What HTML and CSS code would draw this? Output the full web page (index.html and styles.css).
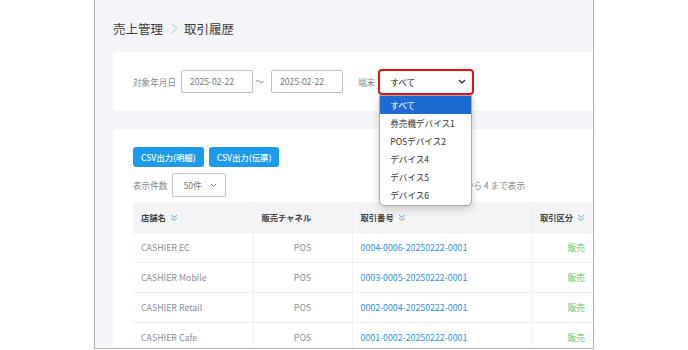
FILE: index.html
```html
<!DOCTYPE html>
<html>
	<head>
		<meta charset="utf-8">
		<title>取引履歴</title>
		<link rel="stylesheet" href="styles.css">
	</head>
	<body>
		<div class="frame">
			<h1 class="crumb">
				<span>売上管理</span>
				<svg class="crumb-sep" width="7" height="11" viewBox="0 0 7 11"><path d="M1 1 L6 5.5 L1 10" fill="none" stroke="#b9bcc4" stroke-width="1"/></svg>
				<span>取引履歴</span>
			</h1>
			<div class="card filter">
				<span class="label">対象年月日</span>
				<div class="input">2025-02-22</div>
				<span class="tilde">〜</span>
				<div class="input">2025-02-22</div>
				<span class="label term">端末</span>
				<div class="select-wrap">
					<div class="select active">
						<span>すべて</span>
						<svg width="8" height="5" viewBox="0 0 8 5"><path d="M1 1 L4 4 L7 1" fill="none" stroke="#333" stroke-width="1.3"/></svg>
					</div>
					<ul class="dropdown">
						<li class="on">すべて</li>
						<li>券売機デバイス1</li>
						<li>POSデバイス2</li>
						<li>デバイス4</li>
						<li>デバイス5</li>
						<li>デバイス6</li>
					</ul>
				</div>
			</div>
			<div class="card list">
				<div class="buttons">
					<div class="btn">CSV出力(明細)</div>
					<div class="btn">CSV出力(伝票)</div>
				</div>
				<div class="length-row">
					<span class="label">表示件数</span>
					<div class="select small">
						<span>50件</span>
						<svg width="7" height="5" viewBox="0 0 7 5"><path d="M1 1 L3.5 3.5 L6 1" fill="none" stroke="#777" stroke-width="1"/></svg>
					</div>
					<span class="info">4 件中 1 から 4 まで表示</span>
				</div>
				<table class="grid">
					<thead>
						<tr>
							<th class="c-shop">店舗名 <svg class="sort" width="8" height="8" viewBox="0 0 8 8"><path d="M1 1 L4 3.5 L7 1 M1 4 L4 6.5 L7 4" fill="none" stroke="#64aef2" stroke-width="1"/></svg></th>
							<th class="c-ch">販売チャネル</th>
							<th class="c-no">取引番号 <svg class="sort" width="8" height="8" viewBox="0 0 8 8"><path d="M1 1 L4 3.5 L7 1 M1 4 L4 6.5 L7 4" fill="none" stroke="#64aef2" stroke-width="1"/></svg></th>
							<th class="c-kind">取引区分 <svg class="sort" width="8" height="8" viewBox="0 0 8 8"><path d="M1 1 L4 3.5 L7 1 M1 4 L4 6.5 L7 4" fill="none" stroke="#64aef2" stroke-width="1"/></svg></th>
						</tr>
					</thead>
					<tbody>
						<tr>
							<td>CASHIER EC</td>
							<td class="center">POS</td>
							<td><span class="link">0004-0006-20250222-0001</span></td>
							<td class="right sale">販売</td>
						</tr>
						<tr>
							<td>CASHIER Mobile</td>
							<td class="center">POS</td>
							<td><span class="link">0003-0005-20250222-0001</span></td>
							<td class="right sale">販売</td>
						</tr>
						<tr>
							<td>CASHIER Retail</td>
							<td class="center">POS</td>
							<td><span class="link">0002-0004-20250222-0001</span></td>
							<td class="right sale">販売</td>
						</tr>
						<tr>
							<td>CASHIER Cafe</td>
							<td class="center">POS</td>
							<td><span class="link">0001-0002-20250222-0001</span></td>
							<td class="right sale">販売</td>
						</tr>
					</tbody>
				</table>
			</div>
		</div>
	</body>
</html>
```

FILE: styles.css
```css
*{
	margin: 0;
	padding: 0;
	box-sizing: border-box;
}
body{
	background-color: #fff;
	font-family: "Noto Sans CJK JP", "Noto Sans", sans-serif;
	font-size: 9px;
	color: #333;
}
.frame{
	width: 500px;
	height: 349px;
	margin-left: 94px;
	padding-left: 18px;
	background-color: #f4f5f9;
	border: 1px solid #b4b4b4;
	border-top: none;
	overflow: hidden;
}
.crumb{
	display: flex;
	align-items: center;
	height: 18px;
	margin-top: 19px;
	font-size: 12.5px;
	font-weight: 400;
	color: #3a3a3a;
}
.crumb-sep{
	margin: 0 6px 0 8px;
}
.card{
	width: 520px;
	background-color: #fff;
	border-radius: 3px;
}
.filter{
	display: flex;
	align-items: center;
	height: 59px;
	margin-top: 15px;
	padding-left: 20px;
}
.label{
	flex: none;
	color: #888;
	font-size: 8.6px;
}
.input{
	flex: none;
	width: 72px;
	height: 23px;
	margin-left: 5px;
	padding-left: 8px;
	border: 1px solid #b9bdc6;
	border-radius: 2px;
	line-height: 21px;
	color: #777;
	font-size: 8.6px;
}
.tilde{
	flex: none;
	width: 13px;
	text-align: center;
	color: #888;
	font-size: 9px;
}
.term{
	margin-left: 15px;
}
.select-wrap{
	position: relative;
	margin-left: 3px;
}
.select{
	display: flex;
	align-items: center;
	justify-content: space-between;
	border: 1px solid #c0c4cc;
	border-radius: 2px;
}
.select.active{
	width: 96px;
	height: 26px;
	padding: 0 6px 0 10px;
	border: 2px solid #e01414;
	border-radius: 4px;
	font-size: 8.6px;
	color: #222;
}
.dropdown{
	position: absolute;
	left: 1px;
	top: 26px;
	width: 93px;
	list-style: none;
	background-color: #fff;
	border: 1px solid #a9a9a9;
	border-radius: 0 0 5px 5px;
	box-shadow: 0 3px 8px rgba(0,0,0,0.18);
	overflow: hidden;
	z-index: 2;
}
.dropdown li{
	height: 18.2px;
	line-height: 18.2px;
	padding-left: 10px;
	font-size: 8.6px;
	color: #333;
}
.dropdown li.on{
	background-color: #1d6bd3;
	color: #fff;
}
.list{
	height: 240px;
	margin-top: 18px;
	padding: 18px 0 0 20px;
}
.buttons{
	display: flex;
	gap: 5px;
}
.btn{
	height: 20px;
	padding: 0 8px;
	line-height: 20px;
	background-color: #1d9ae8;
	border-radius: 3px;
	color: #fff;
	font-size: 8.4px;
	font-weight: 500;
}
.length-row{
	display: flex;
	align-items: center;
	width: 468px;
	margin-top: 6px;
}
.select.small{
	width: 54px;
	height: 24px;
	margin-left: 5px;
	padding: 0 8px 0 10px;
	color: #777;
	font-size: 8.6px;
}
.info{
	margin: 0 76px 0 auto;
	color: #888;
	font-size: 8.6px;
}
.grid{
	width: 468px;
	margin-top: 5px;
	border-collapse: collapse;
	table-layout: fixed;
}
.grid th{
	height: 30px;
	padding: 0 8px;
	background-color: #f4f4f6;
	text-align: left;
	font-weight: 700;
	font-size: 8.3px;
	color: #444;
	white-space: nowrap;
	border-left: 1px solid #eceef3;
}
.grid th:first-child, .grid td:first-child{
	border-left: none;
}
.grid td{
	height: 30px;
	padding: 0 8px;
	color: #8a8f9b;
	font-size: 8.8px;
	white-space: nowrap;
	border-left: 1px solid #eef0f5;
	border-top: 1px solid #eef0f5;
}
.c-shop{
	width: 120px;
}
.c-ch{
	width: 99px;
}
.c-no{
	width: 179px;
}
.grid th.c-kind{
	width: 70px;
	text-align: right;
	padding-right: 16px;
}
.sort{
	margin-left: 2px;
	vertical-align: -1px;
}
.grid td.center{
	text-align: center;
}
.grid td.right{
	text-align: right;
	padding-right: 16px;
}
.link{
	color: #2c93e8;
}
.grid td.sale{
	color: #5fc95f;
}
```
